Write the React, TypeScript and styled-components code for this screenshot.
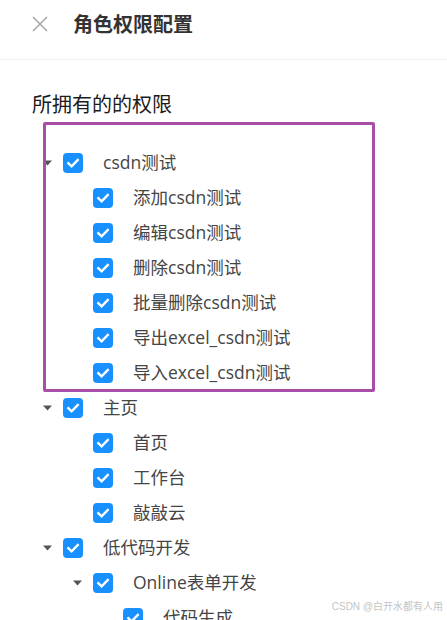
import React from "react";
import styled, { createGlobalStyle } from "styled-components";

const GlobalStyle = createGlobalStyle`
  html, body {
    margin: 0;
    padding: 0;
    background: #ffffff;
    overflow: hidden;
  }
  body {
    font-family: "Open Sans", "Noto Sans CJK SC", sans-serif;
  }
`;

type Node = { title: string; children?: Node[] };

const data: Node[] = [
  {
    title: "csdn测试",
    children: [
      { title: "添加csdn测试" },
      { title: "编辑csdn测试" },
      { title: "删除csdn测试" },
      { title: "批量删除csdn测试" },
      { title: "导出excel_csdn测试" },
      { title: "导入excel_csdn测试" },
    ],
  },
  {
    title: "主页",
    children: [{ title: "首页" }, { title: "工作台" }, { title: "敲敲云" }],
  },
  {
    title: "低代码开发",
    children: [
      {
        title: "Online表单开发",
        children: [{ title: "代码生成" }],
      },
    ],
  },
];

type Flat = { title: string; level: number; hasChildren: boolean };

const flatten = (nodes: Node[], level = 0, out: Flat[] = []): Flat[] => {
  nodes.forEach((n) => {
    out.push({ title: n.title, level, hasChildren: !!n.children?.length });
    if (n.children) flatten(n.children, level + 1, out);
  });
  return out;
};

const Page = styled.div`
  width: 447px;
  height: 620px;
  position: relative;
  overflow: hidden;
`;

const Header = styled.header`
  display: flex;
  align-items: center;
  gap: 25px;
  padding: 12px 32px 23px;
  border-bottom: 1px solid #f0f0f0;
`;

const CloseButton = styled.span`
  display: flex;
  width: 16px;
  height: 24px;
  align-items: center;
  justify-content: center;
  color: #a6a6a6;
`;

const Title = styled.h1`
  margin: 0;
  font-size: 20px;
  line-height: 24px;
  font-weight: 700;
  color: #333333;
  font-family: "Noto Sans CJK SC", sans-serif;
`;

const Body = styled.main`
  padding: 30px 32px 0;
`;

const SectionTitle = styled.h2`
  margin: 0;
  font-size: 20px;
  line-height: 28px;
  font-weight: 400;
  color: #1c1c1c;
  font-family: "Noto Sans CJK SC", sans-serif;
`;

const Tree = styled.ul`
  position: relative;
  list-style: none;
  margin: 27px 0 0;
  padding: 0;
`;

const Row = styled.li`
  display: flex;
  align-items: center;
  height: 35px;
`;

const Indent = styled.span<{ $level: number }>`
  flex: none;
  width: ${(p) => p.$level * 30}px;
`;

const Switcher = styled.span`
  flex: none;
  width: 30px;
  height: 35px;
  display: flex;
  align-items: center;
  justify-content: center;
  color: #555555;
`;

const Checkbox = styled.span`
  flex: none;
  box-sizing: border-box;
  width: 20px;
  height: 20px;
  margin-left: 1px;
  border-radius: 4px;
  background: #1890ff;
  display: flex;
  align-items: center;
  justify-content: center;
`;

const NodeTitle = styled.span`
  margin-left: 20px;
  font-size: 17.5px;
  line-height: 35px;
  color: #454545;
  white-space: nowrap;
`;

const Highlight = styled.div`
  position: absolute;
  left: 11px;
  top: -23px;
  width: 332px;
  height: 270px;
  box-sizing: border-box;
  border: 3px solid #a84ea7;
  border-radius: 2px;
  pointer-events: none;
`;

const Watermark = styled.div`
  position: absolute;
  right: 4px;
  bottom: 7px;
  font-size: 10px;
  line-height: 12px;
  color: #c4c4c4;
  font-family: "Liberation Sans", "Noto Sans CJK SC", sans-serif;
  white-space: nowrap;
`;

const CloseIcon = () => (
  <svg width="16" height="16" viewBox="0 0 16 16" fill="none">
    <path d="M1 1 L15 15 M15 1 L1 15" stroke="currentColor" strokeWidth="1.5" />
  </svg>
);

const Caret = () => (
  <svg width="9" height="6" viewBox="0 0 9 6">
    <polygon points="0,0.5 9,0.5 4.5,5.5" fill="currentColor" />
  </svg>
);

const Check = () => (
  <svg width="20" height="20" viewBox="0 0 20 20" fill="none">
    <path
      d="M5.3 10.2 L8.6 13.3 L14.8 7"
      stroke="#ffffff"
      strokeWidth="2.3"
      strokeLinecap="square"
      strokeLinejoin="miter"
    />
  </svg>
);

export default function App() {
  const rows = flatten(data);
  return (
    <Page>
      <GlobalStyle />
      <Header>
        <CloseButton>
          <CloseIcon />
        </CloseButton>
        <Title>角色权限配置</Title>
      </Header>
      <Body>
        <SectionTitle>所拥有的的权限</SectionTitle>
        <Tree>
          {rows.map((r, i) => (
            <Row key={i}>
              <Indent $level={r.level} />
              <Switcher>{r.hasChildren ? <Caret /> : null}</Switcher>
              <Checkbox>
                <Check />
              </Checkbox>
              <NodeTitle>{r.title}</NodeTitle>
            </Row>
          ))}
          <Highlight />
        </Tree>
      </Body>
      <Watermark>CSDN @白开水都有人用</Watermark>
    </Page>
  );
}
